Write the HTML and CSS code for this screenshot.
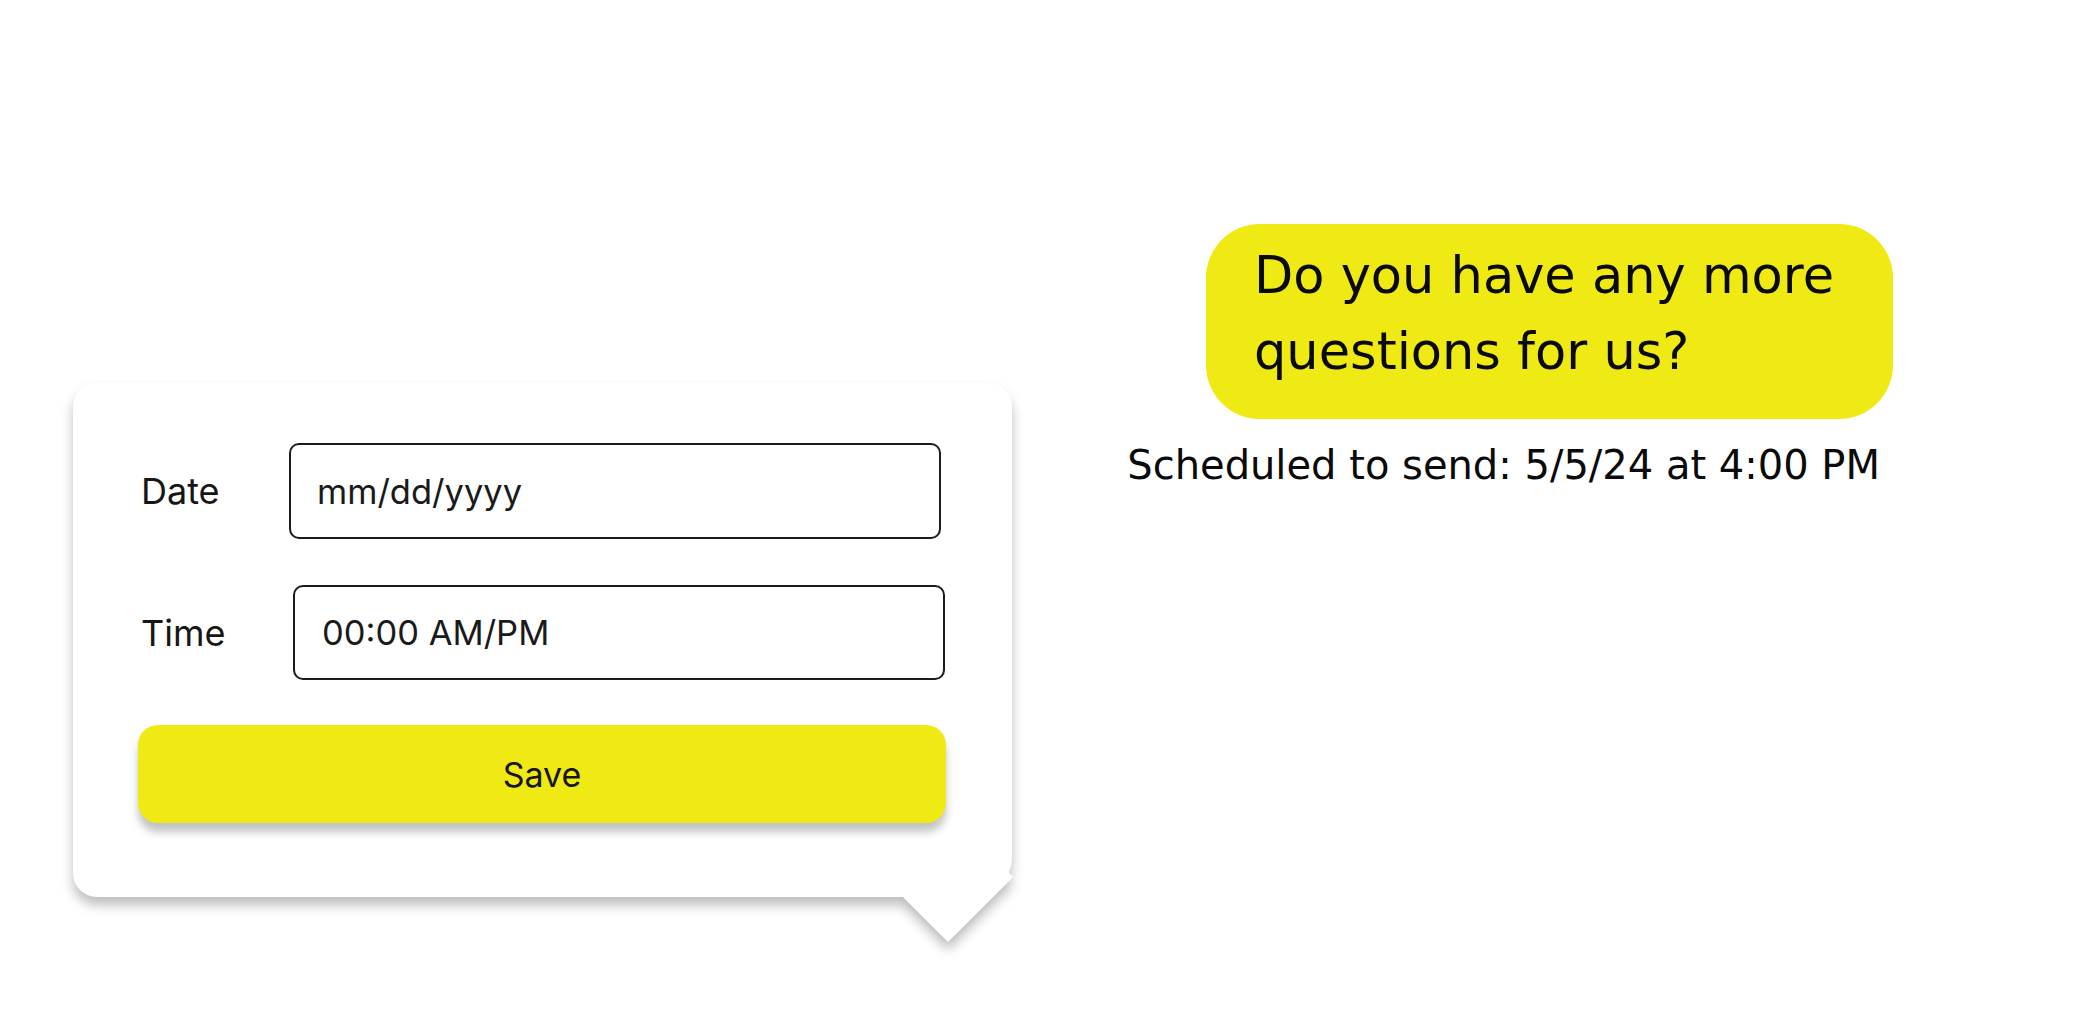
FILE: index.html
```html
<!DOCTYPE html>
<html lang="en">
<head>
<meta charset="utf-8">
<title>Schedule message</title>
<link rel="stylesheet" href="styles.css">
</head>
<body>
<main class="stage">
  <section class="scheduler">
    <form class="card">
      <div class="row">
        <label class="label label-date" for="date">Date</label>
        <input class="field field-date" id="date" type="text" placeholder="mm/dd/yyyy">
      </div>
      <div class="row row-time">
        <label class="label label-time" for="time">Time</label>
        <input class="field field-time" id="time" type="text" placeholder="00:00 AM/PM">
      </div>
      <button class="save" type="button">Save</button>
    </form>
    <div class="pointer"></div>
  </section>
  <section class="message">
    <div class="bubble">Do you have any more questions for us?</div>
    <p class="meta">Scheduled to send: 5/5/24 at 4:00 PM</p>
  </section>
</main>
</body>
</html>
```

FILE: styles.css
```css
* { box-sizing: border-box; }

html, body {
  margin: 0;
  padding: 0;
  background: #ffffff;
}

body {
  width: 2073px;
  height: 1027px;
  overflow: hidden;
  font-family: Inter, "Noto Sans", sans-serif;
  color: #151515;
}

.stage {
  display: flex;
  align-items: flex-start;
  padding-left: 73px;
}

/* ---------- scheduler card ---------- */
.scheduler {
  position: relative;
  margin-top: 383px;
  width: 939px;
  filter: drop-shadow(0 8px 6px rgba(0, 0, 0, 0.26));
}

.card {
  position: relative;
  z-index: 1;
  background: #ffffff;
  border-radius: 24px 24px 40px 24px;
  padding: 60px 66px 74px 65px;
  display: flex;
  flex-direction: column;
  margin: 0;
}

.pointer {
  position: absolute;
  left: 829px;
  top: 448px;
  width: 92px;
  height: 92px;
  background: #ffffff;
  transform: rotate(45deg);
}

.row {
  display: flex;
  align-items: center;
}

.row-time {
  margin-top: 46px;
}

.label {
  font-family: Inter, sans-serif;
  font-size: 36px;
  color: #161616;
  margin-left: 3px;
}

.label-date { width: 148px; }
.label-time { width: 152px; }

.field {
  height: 96px;
  border: 2.5px solid #1b1b1b;
  border-radius: 10px;
  padding: 0 0 0 26px;
  font-family: Inter, sans-serif;
  font-size: 34.5px;
  color: #161616;
  background: #ffffff;
  outline: none;
}

.field::placeholder {
  color: #1a1a1a;
  opacity: 1;
}

.field-date {
  width: 652px;
}

.field-time {
  width: 652px;
  height: 95px;
  padding-left: 27px;
}

.save {
  margin-top: 45px;
  width: 808px;
  height: 98px;
  border: none;
  border-radius: 20px;
  background: #efe914;
  font-family: Inter, sans-serif;
  font-size: 34px;
  color: #161616;
  box-shadow: 0 9px 9px rgba(0, 0, 0, 0.24);
  cursor: pointer;
}

/* ---------- message preview ---------- */
.message {
  margin-top: 224px;
  margin-left: 111px;
  width: 770px;
  display: flex;
  flex-direction: column;
  align-items: flex-end;
}

.bubble {
  width: 687px;
  height: 195px;
  background: #efe914;
  border-radius: 54px;
  padding: 14px 20px 0 48px;
  font-family: "DejaVu Sans", Lato, sans-serif;
  font-size: 51px;
  line-height: 76px;
  color: #0a0a0a;
}

.meta {
  margin: 22px 13px 0 0;
  font-family: "DejaVu Sans", Lato, sans-serif;
  font-size: 40px;
  line-height: 48px;
  color: #0a0a0a;
  white-space: nowrap;
}
```
